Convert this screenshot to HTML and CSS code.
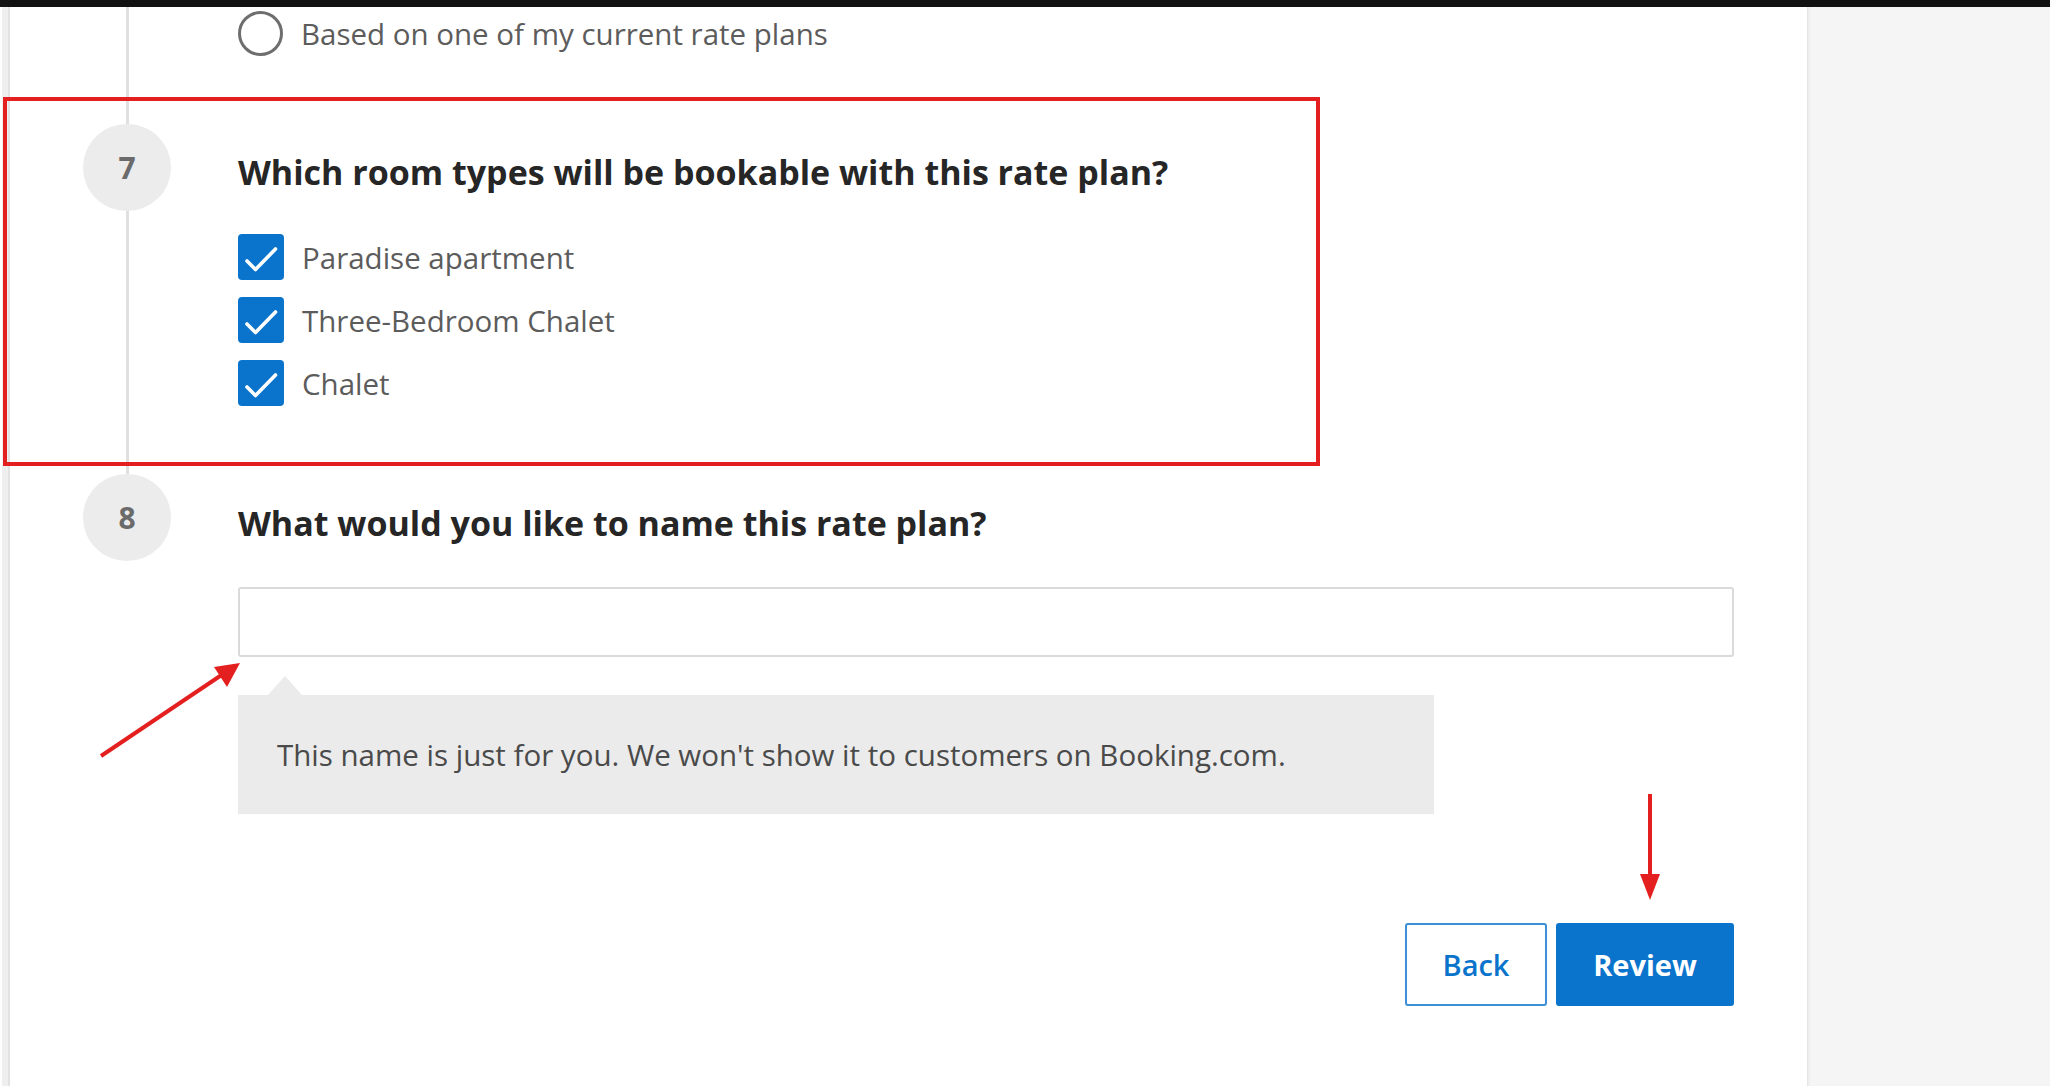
FILE: index.html
```html
<!DOCTYPE html>
<html lang="en">
<head>
<meta charset="utf-8">
<title>Rate plan</title>
<link rel="stylesheet" href="styles.css">
</head>
<body>
<div class="topbar"></div>
<div class="page">
  <main class="main">
    <section class="step step--line step--6">
      <div class="rail"></div>
      <div class="content">
        <div class="option-row">
          <span class="radio"></span>
          <span class="label">Based on one of my current rate plans</span>
        </div>
      </div>
    </section>

    <section class="step step--line step--7">
      <div class="rail"><div class="num">7</div></div>
      <div class="content">
        <h2 class="question">Which room types will be bookable with this rate plan?</h2>
        <ul class="checks">
          <li class="option-row">
            <span class="checkbox"><svg viewBox="0 0 46 46" width="46" height="46"><path d="M9 27 L17.5 35.5 L37.5 15" fill="none" stroke="#fff" stroke-width="3.6" stroke-linecap="round" stroke-linejoin="round"/></svg></span>
            <span class="label">Paradise apartment</span>
          </li>
          <li class="option-row">
            <span class="checkbox"><svg viewBox="0 0 46 46" width="46" height="46"><path d="M9 27 L17.5 35.5 L37.5 15" fill="none" stroke="#fff" stroke-width="3.6" stroke-linecap="round" stroke-linejoin="round"/></svg></span>
            <span class="label">Three-Bedroom Chalet</span>
          </li>
          <li class="option-row">
            <span class="checkbox"><svg viewBox="0 0 46 46" width="46" height="46"><path d="M9 27 L17.5 35.5 L37.5 15" fill="none" stroke="#fff" stroke-width="3.6" stroke-linecap="round" stroke-linejoin="round"/></svg></span>
            <span class="label">Chalet</span>
          </li>
        </ul>
      </div>
    </section>

    <section class="step step--8">
      <div class="rail"><div class="num">8</div></div>
      <div class="content">
        <h2 class="question">What would you like to name this rate plan?</h2>
        <input class="name-input" type="text" aria-label="Rate plan name">
        <div class="tip"><p>This name is just for you. We won't show it to customers on Booking.com.</p></div>
        <div class="actions">
          <button class="btn btn--ghost" type="button">Back</button>
          <button class="btn btn--primary" type="button">Review</button>
        </div>
      </div>
    </section>
  </main>
  <aside class="side"></aside>
</div>

<div class="annot-box"></div>
<svg class="annot-arrows" width="2050" height="1086" viewBox="0 0 2050 1086">
  <line x1="101" y1="756" x2="226" y2="672" stroke="#e3201f" stroke-width="4"/>
  <polygon points="240,663 214,667 227,687" fill="#e3201f"/>
  <line x1="1650" y1="794" x2="1650" y2="878" stroke="#e3201f" stroke-width="4"/>
  <polygon points="1640,874 1660,874 1650,900" fill="#e3201f"/>
</svg>
</body>
</html>
```

FILE: styles.css
```css
* { box-sizing: border-box; }

html, body {
  margin: 0;
  padding: 0;
  background: #ffffff;
}

body {
  position: relative;
  width: 2050px;
  height: 1086px;
  overflow: hidden;
  font-family: "Open Sans", "Noto Sans", "Liberation Sans", sans-serif;
  color: #262626;
}

.topbar {
  height: 7px;
  background: #111111;
}

.page {
  display: flex;
  height: 1079px;
}

.main {
  width: 1805px;
  margin-left: 2px;
  border-left: 6px solid #efefef;
  background: #ffffff;
  box-shadow: inset 2px 0 0 #e2e2e2;
}

.side {
  flex: 1;
  background: #f5f5f5;
  box-shadow: inset 3px 0 3px -2px #dcdcdc;
}

.step {
  position: relative;
  display: grid;
  grid-template-columns: 230px 1fr;
}

.step--line::before {
  content: "";
  position: absolute;
  left: 118px;
  top: 0;
  bottom: 0;
  width: 3px;
  background: #e0e0e0;
}

.rail {
  position: relative;
  padding-left: 75px;
}

.num {
  width: 88px;
  height: 87px;
  border-radius: 50%;
  background: #ececec;
  color: #6b6b6b;
  font-weight: 700;
  font-size: 30px;
  display: flex;
  align-items: center;
  justify-content: center;
}

.content {
  width: 1496px;
}

.step--6 { padding: 3px 0 68px; }
.step--7 .content { padding: 26px 0 68px; }
.step--8 .content { padding-top: 27px; }

.question {
  margin: 0;
  font-size: 34px;
  line-height: 44px;
  font-weight: 700;
  color: #262626;
}

.option-row {
  display: flex;
  align-items: center;
  gap: 18px;
  height: 46px;
}

.label {
  font-size: 29.5px;
  color: #5c5c5c;
}

.radio {
  width: 45px;
  height: 45px;
  border: 3.5px solid #6e6e6e;
  border-radius: 50%;
  background: #fff;
  flex: none;
}

.checks {
  list-style: none;
  margin: 40px 0 0;
  padding: 0;
  display: flex;
  flex-direction: column;
  gap: 17px;
}

.checkbox {
  width: 46px;
  height: 46px;
  border-radius: 4px;
  background: #0a74cc;
  flex: none;
  display: flex;
}

.name-input {
  display: block;
  width: 100%;
  height: 70px;
  margin: 42px 0 0;
  border: 2px solid #dadada;
  border-radius: 3px;
  background: #fff;
  font: inherit;
}

.tip {
  position: relative;
  margin-top: 38px;
  width: 1196px;
  height: 119px;
  background: #ebebeb;
  display: flex;
  align-items: center;
  padding-left: 39px;
}

.tip::before {
  content: "";
  position: absolute;
  left: 30px;
  top: -19px;
  border-left: 17px solid transparent;
  border-right: 17px solid transparent;
  border-bottom: 19px solid #ebebeb;
}

.tip p {
  margin: 0;
  font-size: 29.5px;
  color: #4a4a4a;
}

.actions {
  display: flex;
  justify-content: flex-end;
  gap: 9px;
  margin-top: 109px;
}

.btn {
  height: 83px;
  border-radius: 3px;
  font-family: inherit;
  font-size: 29px;
  font-weight: 700;
  cursor: pointer;
}

.btn--ghost {
  width: 142px;
  background: #fff;
  color: #0a74cc;
  border: 2px solid #3d8fd6;
  font-weight: 600;
}

.btn--primary {
  width: 178px;
  background: #0a74cc;
  color: #fff;
  border: 2px solid #0a74cc;
}

.annot-box {
  position: absolute;
  left: 3px;
  top: 97px;
  width: 1317px;
  height: 369px;
  border: 4px solid #e3201f;
  pointer-events: none;
}

.annot-arrows {
  position: absolute;
  left: 0;
  top: 0;
  pointer-events: none;
}
```
